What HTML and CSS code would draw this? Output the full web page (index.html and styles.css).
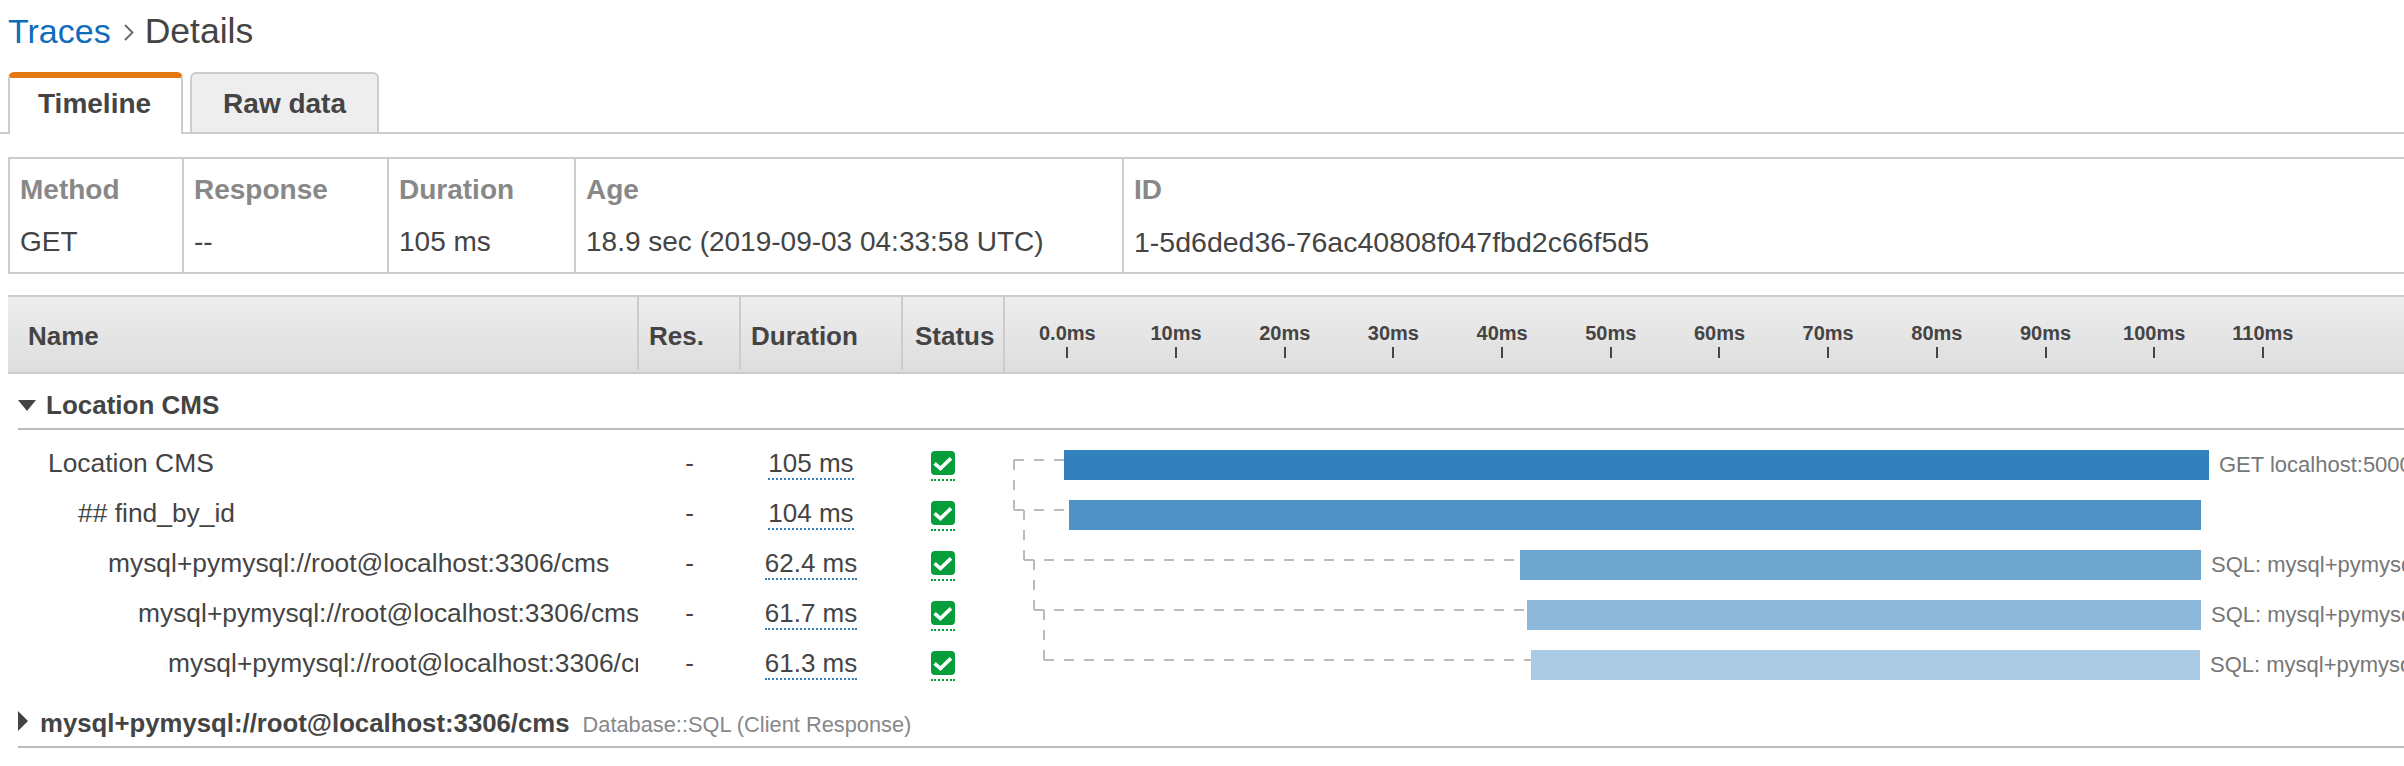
FILE: index.html
```html
<!DOCTYPE html>
<html lang="en">
<head>
  <meta charset="UTF-8">
  <meta name="viewport" content="width=device-width, initial-scale=1.0">
  <title>Traces - Details</title>
  <link rel="stylesheet" href="styles.css">
</head>
<body>
  <h1 class="breadcrumb">
    <a href="#">Traces</a>
    <svg class="crumb-sep" width="10" height="17" viewBox="0 0 10 17"><path d="M1 1 8.5 8.5 1 16" fill="none" stroke="#666666" stroke-width="1.8"/></svg>
    <span>Details</span>
  </h1>

  <div class="tabs">
    <div class="tab tab-active">Timeline</div>
    <div class="tab">Raw data</div>
  </div>

  <!-- Trace summary -->
  <div class="summary">
    <div class="summary-cell"><div class="summary-label">Method</div><div>GET</div></div>
    <div class="summary-cell"><div class="summary-label">Response</div><div>--</div></div>
    <div class="summary-cell"><div class="summary-label">Duration</div><div>105 ms</div></div>
    <div class="summary-cell"><div class="summary-label">Age</div><div>18.9 sec (2019-09-03 04:33:58 UTC)</div></div>
    <div class="summary-cell"><div class="summary-label">ID</div><div class="trace-id">1-5d6ded36-76ac40808f047fbd2c66f5d5</div></div>
  </div>

  <!-- Table header -->
  <div class="grid-head">
    <div class="head-cell head-name">Name</div>
    <div class="head-cell head-res">Res.</div>
    <div class="head-cell head-duration">Duration</div>
    <div class="head-cell head-status">Status</div>
    <div class="scale">
      <div class="tick">0.0ms</div>
      <div class="tick">10ms</div>
      <div class="tick">20ms</div>
      <div class="tick">30ms</div>
      <div class="tick">40ms</div>
      <div class="tick">50ms</div>
      <div class="tick">60ms</div>
      <div class="tick">70ms</div>
      <div class="tick">80ms</div>
      <div class="tick">90ms</div>
      <div class="tick">100ms</div>
      <div class="tick">110ms</div>
    </div>
  </div>

  <!-- Location CMS -->
  <div class="section">
    <div class="section-title section-open">
      <span class="caret-down"></span>
      <span class="section-name">Location CMS</span>
    </div>
    <div class="rows">
      <div class="row">
        <div class="row-name depth-0">Location CMS</div>
        <div class="row-res">-</div>
        <div class="row-duration"><span class="duration-link">105 ms</span></div>
        <div class="row-status">
          <svg class="status-ok" viewBox="0 0 24 24"><rect width="24" height="24" rx="4" fill="#069e3a"/><path d="M3.6 12.4 9.4 17.6 20 7.4" fill="none" stroke="#fff" stroke-width="3.6"/></svg>
        </div>
        <div class="row-bar">
          <div class="bar bar-1" style="margin-left: 59px; width: 1145px"></div>
          <span class="bar-label">GET localhost:5000</span>
        </div>
      </div>
      <div class="row">
        <div class="row-name depth-1">## find_by_id</div>
        <div class="row-res">-</div>
        <div class="row-duration"><span class="duration-link">104 ms</span></div>
        <div class="row-status">
          <svg class="status-ok" viewBox="0 0 24 24"><rect width="24" height="24" rx="4" fill="#069e3a"/><path d="M3.6 12.4 9.4 17.6 20 7.4" fill="none" stroke="#fff" stroke-width="3.6"/></svg>
        </div>
        <div class="row-bar">
          <div class="bar bar-2" style="margin-left: 64px; width: 1132px"></div>
        </div>
      </div>
      <div class="row">
        <div class="row-name depth-2">mysql+pymysql://root@localhost:3306/cms</div>
        <div class="row-res">-</div>
        <div class="row-duration"><span class="duration-link">62.4 ms</span></div>
        <div class="row-status">
          <svg class="status-ok" viewBox="0 0 24 24"><rect width="24" height="24" rx="4" fill="#069e3a"/><path d="M3.6 12.4 9.4 17.6 20 7.4" fill="none" stroke="#fff" stroke-width="3.6"/></svg>
        </div>
        <div class="row-bar">
          <div class="bar bar-3" style="margin-left: 515px; width: 681px"></div>
          <span class="bar-label">SQL: mysql+pymysql</span>
        </div>
      </div>
      <div class="row">
        <div class="row-name depth-3">mysql+pymysql://root@localhost:3306/cms</div>
        <div class="row-res">-</div>
        <div class="row-duration"><span class="duration-link">61.7 ms</span></div>
        <div class="row-status">
          <svg class="status-ok" viewBox="0 0 24 24"><rect width="24" height="24" rx="4" fill="#069e3a"/><path d="M3.6 12.4 9.4 17.6 20 7.4" fill="none" stroke="#fff" stroke-width="3.6"/></svg>
        </div>
        <div class="row-bar">
          <div class="bar bar-4" style="margin-left: 522px; width: 674px"></div>
          <span class="bar-label">SQL: mysql+pymysql</span>
        </div>
      </div>
      <div class="row">
        <div class="row-name depth-4">mysql+pymysql://root@localhost:3306/cms</div>
        <div class="row-res">-</div>
        <div class="row-duration"><span class="duration-link">61.3 ms</span></div>
        <div class="row-status">
          <svg class="status-ok" viewBox="0 0 24 24"><rect width="24" height="24" rx="4" fill="#069e3a"/><path d="M3.6 12.4 9.4 17.6 20 7.4" fill="none" stroke="#fff" stroke-width="3.6"/></svg>
        </div>
        <div class="row-bar">
          <div class="bar bar-5" style="margin-left: 526px; width: 669px"></div>
          <span class="bar-label">SQL: mysql+pymysql</span>
        </div>
      </div>

      <!-- Parent/child connectors -->
      <svg class="connectors" width="1520" height="250">
        <path d="M996 22H1046M996 22V72M996 72H1051M1006 72V122M1006 122H1502M1016 122V172M1016 172H1509M1026 172V222M1026 222H1513"/>
      </svg>
    </div>
  </div>

  <!-- Collapsed segment -->
  <div class="section">
    <div class="section-title section-closed">
      <span class="caret-right"></span>
      <span class="section-name section-name-long">mysql+pymysql://root@localhost:3306/cms</span>
      <span class="section-type">Database::SQL (Client Response)</span>
    </div>
  </div>
</body>
</html>
```

FILE: styles.css
```css
/* Global Styles */
html, body {
  overflow: hidden;
}

body {
  font-family: 'Liberation Sans', Arial, sans-serif;
  font-size: 28px;
  margin: 0;
  padding: 0;
  background: #ffffff;
  color: #444444;
}

/* Breadcrumb */
.breadcrumb {
  display: flex;
  align-items: center;
  height: 40px;
  font-size: 35.5px;
  font-weight: normal;
  line-height: 40px;
  margin: 0;
  padding: 11px 0 21px 8px;
}

.breadcrumb a {
  font-size: 34px;
  color: #0f6cbd;
  text-decoration: none;
}

.crumb-sep {
  margin: 3px 11px 0 13px;
}

/* Tabs */
.tabs {
  display: flex;
  gap: 7px;
  height: 60px;
  padding-left: 8px;
  border-bottom: 2px solid #cccccc;
}

.tab {
  display: flex;
  align-items: center;
  padding: 2px 31px 0;
  font-weight: bold;
  background: #eeeeee;
  border: 2px solid #cccccc;
  border-bottom: none;
  border-radius: 6px 6px 0 0;
}

.tab-active {
  height: 62px;
  padding: 0 30px 4px 28px;
  background: #ffffff;
  border-top: 6px solid #e47911;
  box-sizing: border-box;
}

/* Summary */
.summary {
  display: grid;
  grid-template-columns: 174px 205px 187px 548px 1fr;
  margin: 23px 0 21px 8px;
  border: 2px solid #cccccc;
  border-right: none;
}

.summary-cell {
  padding: 11px 10px 10px;
  line-height: 40px;
  border-right: 2px solid #cccccc;
  white-space: nowrap;
}

.summary-cell:last-child {
  border-right: none;
}

.summary-label {
  font-weight: bold;
  color: #888888;
  margin-bottom: 12px;
}

.trace-id {
  font-size: 28.5px;
}

/* Table Header */
.grid-head {
  display: grid;
  grid-template-columns: 631px 102px 162px 102px 1fr;
  height: 75px;
  margin-left: 8px;
  border-top: 2px solid #cccccc;
  border-bottom: 2px solid #cccccc;
  background: linear-gradient(#eeeeee, #dddddd);
  font-size: 26px;
  font-weight: bold;
}

.head-cell {
  display: flex;
  align-items: center;
  height: 73px;
  box-sizing: border-box;
  border-right: 2px solid #cccccc;
  padding: 5px 0 0 10px;
}

.head-name {
  padding-left: 20px;
}

.head-status {
  height: 75px;
  padding: 5px 0 2px 12px;
}

.scale {
  display: flex;
  padding-left: 8px;
  font-size: 20px;
}

.tick {
  flex: none;
  width: 108.7px;
  padding-top: 24px;
  line-height: 24px;
  text-align: center;
}

.tick::after {
  content: "";
  display: block;
  width: 2px;
  height: 11px;
  margin: 2px auto 0;
  background: #444444;
}

/* Sections */
.section {
  margin-left: 18px;
  font-size: 26px;
}

.section-title {
  display: flex;
  align-items: center;
  border-bottom: 2px solid #bbbbbb;
  white-space: nowrap;
}

.section-open {
  height: 46px;
  padding-top: 8px;
}

.section-closed {
  height: 60px;
  align-items: flex-end;
  padding-bottom: 8px;
  box-sizing: border-box;
}

.section-name {
  font-weight: bold;
}

.section-name-long {
  font-size: 25.75px;
}

.section-type {
  margin-left: 13px;
  font-size: 21.8px;
  color: #888888;
}

.caret-down {
  width: 0;
  height: 0;
  margin-right: 10px;
  border-left: 9.5px solid transparent;
  border-right: 9.5px solid transparent;
  border-top: 11px solid #444444;
}

.caret-right {
  width: 0;
  height: 0;
  margin-right: 12px;
  margin-bottom: 7px;
  border-top: 10px solid transparent;
  border-bottom: 10px solid transparent;
  border-left: 10px solid #444444;
}

/* Rows */
.rows {
  position: relative;
  margin-top: 8px;
}

.row {
  display: grid;
  grid-template-columns: 620px 103px 162px 102px 1fr;
  align-items: center;
  height: 50px;
}

.row-name {
  overflow: hidden;
  white-space: nowrap;
  font-size: 26.4px;
}

.depth-0 { padding-left: 30px; }
.depth-1 { padding-left: 60px; }
.depth-2 { padding-left: 90px; }
.depth-3 { padding-left: 120px; }
.depth-4 { padding-left: 150px; }

.row-res {
  text-align: center;
}

.row-duration {
  padding-right: 22px;
  text-align: center;
}

.duration-link {
  display: inline-block;
  margin-top: 2px;
  line-height: 30px;
  border-bottom: 2px dotted #2e7fbf;
}

.row-status {
  display: flex;
  padding: 6px 0 0 28px;
}

.status-ok {
  display: block;
  width: 24px;
  height: 24px;
  padding-bottom: 4px;
  border-bottom: 2px dotted #069e3a;
}

.row-bar {
  display: flex;
  align-items: center;
  height: 30px;
  margin-top: 4px;
  white-space: nowrap;
}

.bar {
  flex: none;
  height: 30px;
}

.bar-1 { background: #3280bc; }
.bar-2 { background: #4f93c6; }
.bar-3 { background: #6fa6d0; }
.bar-4 { background: #8db8da; }
.bar-5 { background: #abcbe5; }

.bar-label {
  margin-left: 10px;
  font-size: 22px;
  color: #777777;
}

.connectors {
  position: absolute;
  top: 0;
  left: 0;
  pointer-events: none;
}

.connectors path {
  fill: none;
  stroke: #bbbbbb;
  stroke-width: 2;
  stroke-dasharray: 10 10;
}
```
